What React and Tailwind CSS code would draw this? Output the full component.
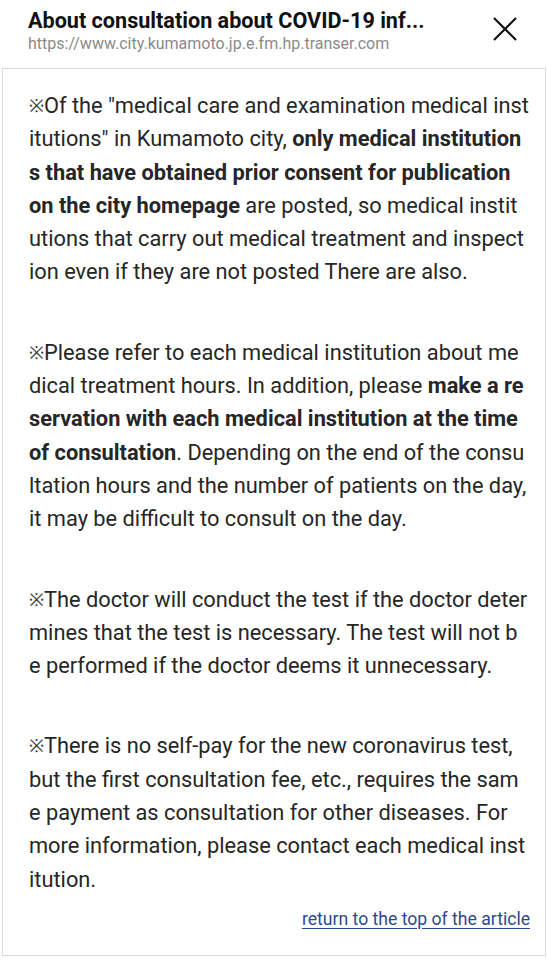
import React from "react";

const K = () => <span className="text-[18px] align-[1px] text-[#3a3a3a]">※</span>;

const P = ({ lines }) => (
  <div className="flex flex-col">
    {lines.map((l, i) => (
      <div key={i} className="whitespace-nowrap h-[33.3px] leading-[33.3px]">
        {l}
      </div>
    ))}
  </div>
);

export default function App() {
  const b = (t) => <span className="font-bold">{t}</span>;
  return (
    <div
      className="w-[548px] h-[960px] bg-white overflow-hidden text-[#212121]"
      style={{ fontFamily: "Roboto, 'Liberation Sans', sans-serif" }}
    >
      <div className="h-[68px] flex items-start justify-between pl-[28px] pr-[30px]">
        <div className="pt-[6px]">
          <div className="text-[21.6px] font-bold leading-[30px] text-[#111]">
            About consultation about COVID-19 inf...
          </div>
          <div className="text-[16px] leading-[16px] text-[#8a8a8a]">
            https://www.city.kumamoto.jp.e.fm.hp.transer.com
          </div>
        </div>
        <svg width="26" height="26" viewBox="0 0 26 26" className="mt-[16px]">
          <path d="M2 2 L24 24 M24 2 L2 24" stroke="#111" strokeWidth="2.2" fill="none" />
        </svg>
      </div>
      <div className="mx-[2px] h-[888px] border border-[#dcdcdc] pl-[26px] pr-[4px] pt-[20px] text-[21.8px] text-[#262626]">
        <P
          lines={[
            <><K />Of the "medical care and examination medical inst</>,
            <>itutions" in Kumamoto city, {b("only medical institution")}</>,
            <>{b("s that have obtained prior consent for publication")}</>,
            <>{b("on the city homepage")} are posted, so medical instit</>,
            <>utions that carry out medical treatment and inspect</>,
            <>ion even if they are not posted There are also.</>,
          ]}
        />
        <div className="h-[47px]" />
        <P
          lines={[
            <><K />Please refer to each medical institution about me</>,
            <>dical treatment hours. In addition, please {b("make a re")}</>,
            <>{b("servation with each medical institution at the time")}</>,
            <>{b("of consultation")}. Depending on the end of the consu</>,
            <>ltation hours and the number of patients on the day,</>,
            <>it may be difficult to consult on the day.</>,
          ]}
        />
        <div className="h-[47px]" />
        <P
          lines={[
            <><K />The doctor will conduct the test if the doctor deter</>,
            <>mines that the test is necessary. The test will not b</>,
            <>e performed if the doctor deems it unnecessary.</>,
          ]}
        />
        <div className="h-[47px]" />
        <P
          lines={[
            <><K />There is no self-pay for the new coronavirus test,</>,
            <>but the first consultation fee, etc., requires the sam</>,
            <>e payment as consultation for other diseases. For</>,
            <>more information, please contact each medical inst</>,
            <>itution.</>,
          ]}
        />
        <div className="flex justify-end pr-[11px] mt-[12px]">
          <a className="text-[17.6px] leading-[22px] text-[#2c4a8c] underline underline-offset-[3px]">
            return to the top of the article
          </a>
        </div>
      </div>
    </div>
  );
}
